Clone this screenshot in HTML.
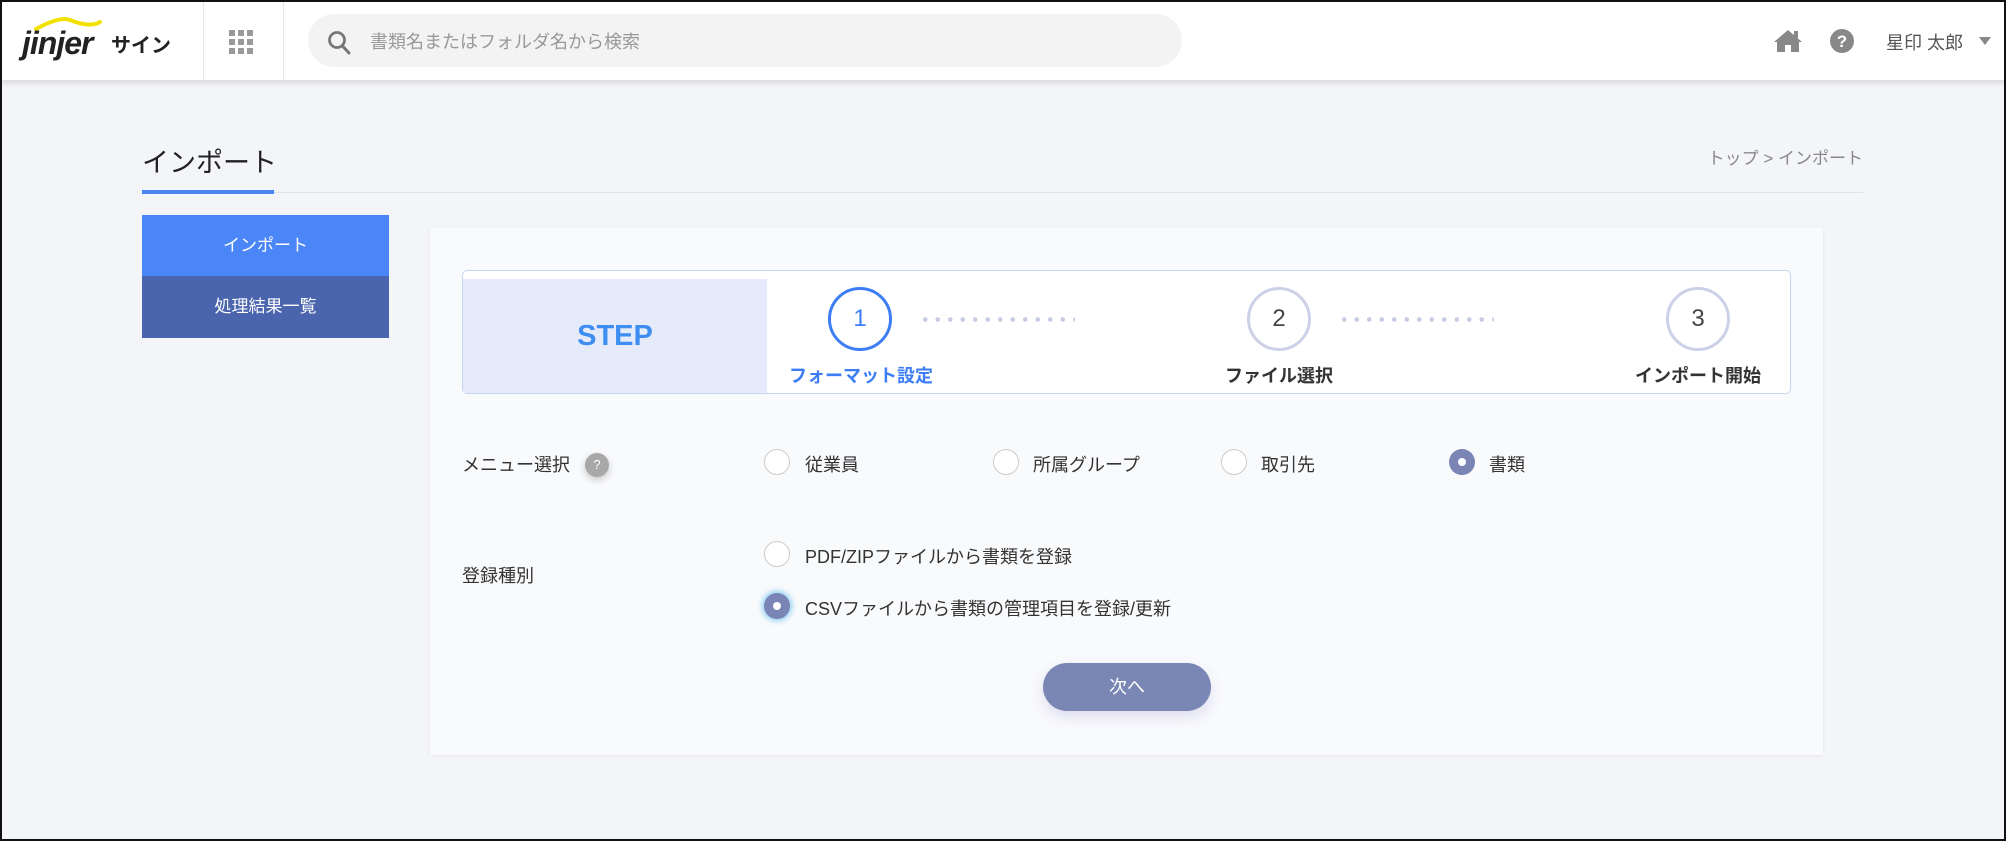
<!DOCTYPE html>
<html><head><meta charset="utf-8"><style>
*{margin:0;padding:0;box-sizing:border-box}
body{width:2006px;height:841px;overflow:hidden;background:#f4f5f9;font-family:"Liberation Sans","Noto Sans CJK JP",sans-serif;color:#333;position:relative}
.frame{position:absolute;inset:0;border:2px solid #111;z-index:10;pointer-events:none}
.abs{position:absolute}
header{position:absolute;left:0;top:0;width:2006px;height:80px;background:#fff;box-shadow:0 3px 6px rgba(0,0,0,.12)}
.vl{position:absolute;top:0;width:1px;height:80px;background:#e8e8e8}
.search{left:308px;top:14px;width:874px;height:53px;border-radius:27px;background:#f3f3f3;font-size:18px;color:#999;padding:14px 0 0 62px}
.radio{position:absolute;width:26px;height:26px;border-radius:50%;border:1px solid #ccc;background:#fff}
.radio.on{border:none;background:#7a84b5}
.radio.on::after{content:"";position:absolute;left:9px;top:9px;width:8px;height:8px;border-radius:50%;background:#fff}
.lbl{position:absolute;font-size:18px;color:#333;white-space:nowrap}
.circ{position:absolute;width:64px;height:64px;border-radius:50%;border:3px solid #ccd1e8;background:#fff;font-size:24px;text-align:center;line-height:58px;color:#444}
.dots{position:absolute;height:5px;background:radial-gradient(circle,#c5cbe3 2px,transparent 2.5px) 0 0/12.5px 5px repeat-x}
.slbl{position:absolute;font-size:18px;font-weight:bold;color:#333;white-space:nowrap;transform:translateX(-50%)}
</style></head><body>
<div class="frame"></div>
<header>
 <svg class="abs" style="left:30px;top:16px" width="76" height="16" viewBox="0 0 76 16"><path d="M6 13 Q30 0 40 4 Q60 12 70 6" fill="none" stroke="#f2e100" stroke-width="4" stroke-linecap="round"/></svg>
 <div class="abs" style="left:22px;top:25px;font-size:32px;font-weight:bold;font-style:italic;color:#222;letter-spacing:-1px">jinjer</div>
 <div class="abs" style="left:111px;top:29px;font-size:20px;font-weight:bold;color:#222">サイン</div>
 <div class="vl" style="left:203px"></div>
 <div class="vl" style="left:283px"></div>
 <svg class="abs" style="left:229px;top:30px" width="24" height="24" viewBox="0 0 24 24" fill="#999"><rect x="0" y="0" width="6" height="6"/><rect x="9" y="0" width="6" height="6"/><rect x="18" y="0" width="6" height="6"/><rect x="0" y="9" width="6" height="6"/><rect x="9" y="9" width="6" height="6"/><rect x="18" y="9" width="6" height="6"/><rect x="0" y="18" width="6" height="6"/><rect x="9" y="18" width="6" height="6"/><rect x="18" y="18" width="6" height="6"/></svg>
 <div class="abs search">書類名またはフォルダ名から検索</div>
 <svg class="abs" style="left:327px;top:30px" width="24" height="26" viewBox="0 0 24 26"><circle cx="10" cy="10" r="7.5" fill="none" stroke="#777" stroke-width="2.8"/><path d="M15.5 16 L22 23" stroke="#777" stroke-width="3" stroke-linecap="round"/></svg>
 <svg class="abs" style="left:1773px;top:28px" width="30" height="26" viewBox="0 0 30 26"><path d="M15 2 L1 14 L4 14 L4 24 L12 24 L12 17 L18 17 L18 24 L26 24 L26 14 L29 14 Z" fill="#888"/><rect x="21" y="3" width="4" height="7" fill="#888"/></svg>
 <svg class="abs" style="left:1829px;top:28px" width="26" height="26" viewBox="0 0 26 26"><circle cx="13" cy="13" r="12" fill="#888"/><text x="13" y="19" text-anchor="middle" font-size="17" font-weight="bold" fill="#fff" font-family="Liberation Sans">?</text></svg>
 <div class="abs" style="left:1886px;top:29px;font-size:18px;color:#555">星印 太郎</div>
 <div class="abs" style="left:1979px;top:37px;width:0;height:0;border-left:6px solid transparent;border-right:6px solid transparent;border-top:8px solid #888"></div>
</header>
<div class="abs" style="left:142px;top:141px;font-size:27px;color:#222">インポート</div>
<div class="abs" style="left:142px;top:192px;width:1721px;height:1px;background:#dfe2ec"></div>
<div class="abs" style="left:142px;top:190px;width:132px;height:4px;background:#4b86f0"></div>
<div class="abs" style="right:143px;top:144px;font-size:17px;color:#888">トップ &gt; インポート</div>
<div class="abs" style="left:142px;top:215px;width:247px;height:61px;background:#4a86f7;color:#fff;font-size:17px;text-align:center;line-height:61px">インポート</div>
<div class="abs" style="left:142px;top:276px;width:247px;height:62px;background:#4a64ae;color:#fff;font-size:17px;text-align:center;line-height:62px">処理結果一覧</div>
<div class="abs" style="left:430px;top:228px;width:1393px;height:527px;background:#f9fafc;box-shadow:0 1px 4px rgba(0,0,0,.05)"></div>
<div class="abs" style="left:462px;top:270px;width:1329px;height:124px;border:1.5px solid #c5d5f5;border-radius:5px;background:#fff"></div>
<div class="abs" style="left:463px;top:279px;width:304px;height:114px;background:#e6ebfb;color:#3d8ef0;font-size:29px;font-weight:bold;text-align:center;line-height:114px">STEP</div>
<div class="circ" style="left:828px;top:287px;border-color:#3d7ef5;color:#3d7ef5">1</div>
<div class="circ" style="left:1247px;top:287px">2</div>
<div class="circ" style="left:1666px;top:287px">3</div>
<div class="dots" style="left:919px;top:317px;width:156px"></div>
<div class="dots" style="left:1338px;top:317px;width:156px"></div>
<div class="slbl" style="left:861px;top:362px;color:#3d7ef5">フォーマット設定</div>
<div class="slbl" style="left:1279px;top:362px">ファイル選択</div>
<div class="slbl" style="left:1698px;top:362px">インポート開始</div>
<div class="lbl" style="left:462px;top:451px">メニュー選択</div>
<div class="abs" style="left:585px;top:453px;width:24px;height:24px;border-radius:50%;background:#a8a8a8;color:#fff;font-size:13px;text-align:center;line-height:24px;box-shadow:0 3px 8px rgba(0,0,0,.2)">?</div>
<div class="radio" style="left:764px;top:449px"></div><div class="lbl" style="left:805px;top:451px">従業員</div>
<div class="radio" style="left:993px;top:449px"></div><div class="lbl" style="left:1033px;top:451px">所属グループ</div>
<div class="radio" style="left:1221px;top:449px"></div><div class="lbl" style="left:1261px;top:451px">取引先</div>
<div class="radio on" style="left:1449px;top:449px"></div><div class="lbl" style="left:1489px;top:451px">書類</div>
<div class="lbl" style="left:462px;top:562px">登録種別</div>
<div class="radio" style="left:764px;top:541px"></div><div class="lbl" style="left:805px;top:543px">PDF/ZIPファイルから書類を登録</div>
<div class="radio on" style="left:764px;top:593px;box-shadow:0 0 6px 2px #8fd0f5"></div><div class="lbl" style="left:805px;top:595px">CSVファイルから書類の管理項目を登録/更新</div>
<div class="abs" style="left:1043px;top:663px;width:168px;height:48px;border-radius:24px;background:#7a86b3;color:#fff;font-size:18px;text-align:center;line-height:48px;box-shadow:0 6px 14px rgba(120,110,200,.2)">次へ</div>
</body></html>
